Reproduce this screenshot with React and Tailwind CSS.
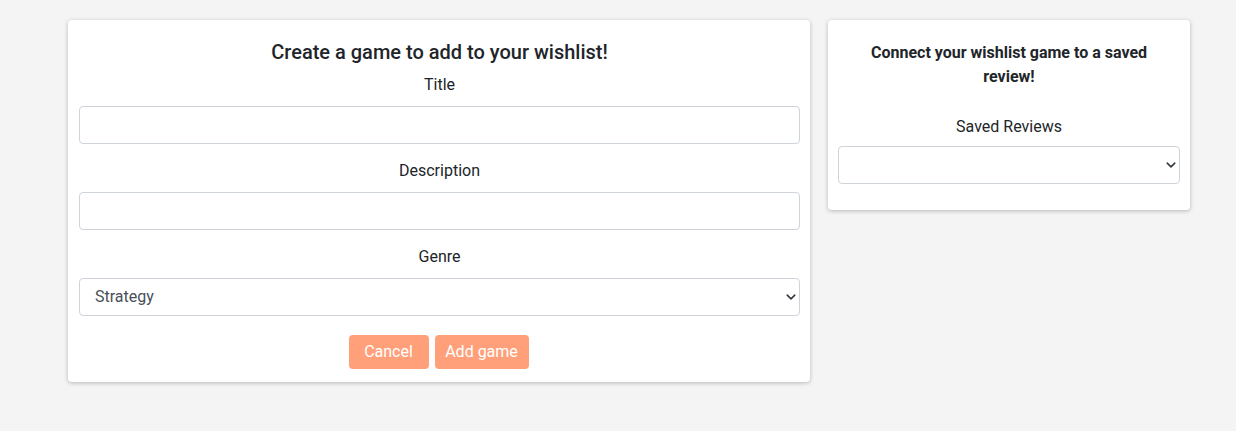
import { useState } from "react";

function Chevron() {
    return (
        <svg className="pointer-events-none absolute right-[4px] top-1/2 -translate-y-1/2" width="10" height="10" viewBox="0 0 16 16">
            <path d="M2 5l6 6 6-6" fill="none" stroke="#343a40" strokeWidth="2.5" strokeLinecap="round" strokeLinejoin="round" />
        </svg>
    );
}

function Field({ label, gap = "mb-[9px]", children }) {
    return (
        <div className="flex flex-col">
            <label className={"text-center text-[16px] leading-[24px] text-[#212529] " + gap}>{label}</label>
            {children}
        </div>
    );
}

export default function App() {
    const [title, setTitle] = useState("");
    const [description, setDescription] = useState("");
    const [genre, setGenre] = useState("Strategy");

    const inputClass = "w-full h-[38px] px-[12px] rounded-[4px] border border-[#ced4da] bg-white text-[16px] text-[#495057] outline-none";

    return (
        <div className="min-h-screen bg-[#f4f4f4] font-['Roboto',sans-serif] text-[#212529]">
            <div className="flex items-start gap-[18px] pl-[68px] pt-[20px]">
                <div className="w-[742px] bg-white rounded-[4px] shadow-[0_1px_4px_rgba(0,0,0,0.25)] pl-[11px] pr-[10px] pt-[20px] pb-[13px]">
                    <h2 className="text-center text-[20px] leading-[24px] font-medium mb-[9px]">Create a game to add to your wishlist!</h2>
                    <div className="flex flex-col gap-[15px]">
                        <Field label="Title">
                            <input className={inputClass} value={title} onChange={(e) => setTitle(e.target.value)} />
                        </Field>
                        <Field label="Description">
                            <input className={inputClass} value={description} onChange={(e) => setDescription(e.target.value)} />
                        </Field>
                        <Field label="Genre">
                            <div className="relative">
                                <select className={inputClass + " appearance-none px-[15px]"} value={genre} onChange={(e) => setGenre(e.target.value)}>
                                    <option>Strategy</option>
                                    <option>Action</option>
                                    <option>RPG</option>
                                    <option>Puzzle</option>
                                </select>
                                <Chevron />
                            </div>
                        </Field>
                    </div>
                    <div className="flex justify-center gap-[6px] mt-[19px] pr-[2px]">
                        <button className="h-[34px] w-[80px] rounded-[4px] bg-[#ffa07a] text-white text-[16px]">Cancel</button>
                        <button className="h-[34px] w-[94px] rounded-[4px] bg-[#ffa07a] text-white text-[16px]">Add game</button>
                    </div>
                </div>

                <div className="w-[362px] bg-white rounded-[4px] shadow-[0_1px_4px_rgba(0,0,0,0.25)] px-[10px] pt-[21px] pb-[26px]">
                    <p className="text-center text-[16px] leading-[24px] font-bold px-[20px]">Connect your wishlist game to a saved review!</p>
                    <div className="mt-[26px]">
                        <Field label="Saved Reviews" gap="mb-[7px]">
                            <div className="relative">
                                <select className={inputClass + " appearance-none"} defaultValue="">
                                    <option value=""></option>
                                </select>
                                <Chevron />
                            </div>
                        </Field>
                    </div>
                </div>
            </div>
        </div>
    );
}
